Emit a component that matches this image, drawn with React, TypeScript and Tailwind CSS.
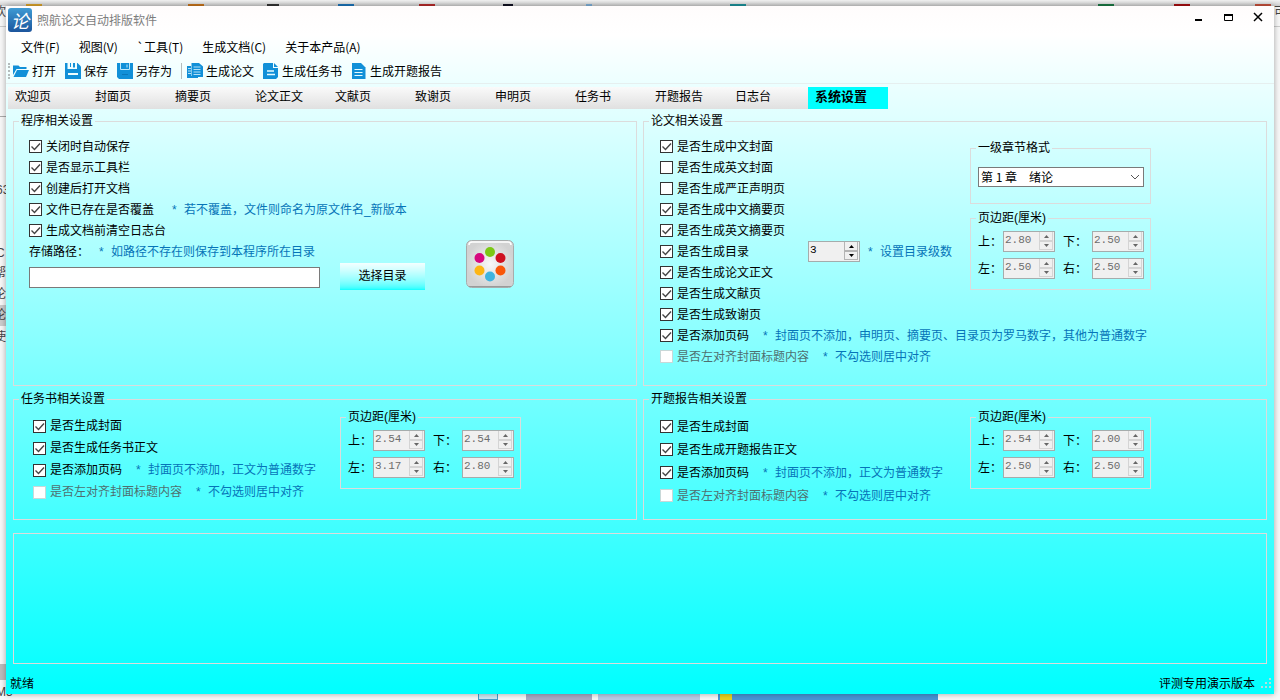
import { useId, useState, type ReactNode } from "react";

const TABS = [
  "欢迎页",
  "封面页",
  "摘要页",
  "论文正文",
  "文献页",
  "致谢页",
  "申明页",
  "任务书",
  "开题报告",
  "日志台",
  "系统设置",
];

const MENUS = ["文件(F)", "视图(V)", "`工具(T)", "生成文档(C)", "关于本产品(A)"];

const DOTS = [
  { x: 24, y: 12, fill: "#7bc814" },
  { x: 34.5, y: 18, fill: "#cf1020" },
  { x: 34.5, y: 30.5, fill: "#f9570a" },
  { x: 24, y: 36.5, fill: "#3fb4e0" },
  { x: 13.5, y: 30.5, fill: "#fdb515" },
  { x: 13.5, y: 18, fill: "#d6077f" },
];

function OpenIcon() {
  return (
    <svg viewBox="0 0 16 16" className="size-4" fill="#1190d8">
      <path d="M0 12V2.5h5.5L7 4h6.5v2H3.5z" />
      <path d="M4 7h12l-3 7H.5z" />
    </svg>
  );
}

function SaveIcon() {
  return (
    <svg viewBox="0 0 16 16" className="size-4">
      <path d="M0 0h12.5L16 3.5V16H0z" fill="#1190d8" />
      <path d="M2.5 0H12v6H2.5z" fill="#eefeff" />
      <path d="M5 0h1v4H5zM8 0h2v4.5H8z" fill="#1190d8" />
      <path d="M3 10h10v2H3z" fill="#eefeff" />
    </svg>
  );
}

function SaveAsIcon() {
  return (
    <svg viewBox="0 0 16 16" className="size-4">
      <path d="M0 0h16v16H2l-2-2z" fill="#1190d8" />
      <path d="M3.5 0v6.5h9V0M10 1.5v3" fill="none" stroke="#bfe9fb" />
      <path d="M5 11.5h6" stroke="#0a78bb" />
    </svg>
  );
}

function PagesIcon() {
  return (
    <svg viewBox="0 0 16 16" className="size-4">
      <path d="M0 3h4v10h7v2H0z" fill="#1190d8" />
      <path d="M4.5 0H12l4 3.5V14H4.5z" fill="#1190d8" />
      <path d="M6.5 4h7M6.5 6.5h7M6.5 9h7M6.5 11.5h7M1 5.5h3M1 8h3M1 10.5h3" stroke="#d9f5ff" strokeWidth="0.8" />
    </svg>
  );
}

function TaskIcon() {
  return (
    <svg viewBox="0 0 16 16" className="size-4">
      <path d="M1 0h9v5h5v9l-2 2H0V1z" fill="#1190d8" />
      <path d="M11 0l4 4h-4z" fill="#1190d8" />
      <path d="M4 8h7M4 11.5h8" stroke="#e6fbff" strokeWidth="1.5" />
    </svg>
  );
}

function ReportIcon() {
  return (
    <svg viewBox="0 0 16 16" className="size-4">
      <path d="M1 0h9l4.5 4.5V16H1z" fill="#1190d8" />
      <path d="M3.5 6.5h8M3.5 9.5h8M3.5 12.5h8" stroke="#e6fbff" strokeWidth="1.2" />
    </svg>
  );
}

function ToolButton({ icon, label }: { icon: ReactNode; label: string }) {
  return (
    <button type="button" className="flex items-center gap-[3px] whitespace-nowrap">
      {icon}
      {label}
    </button>
  );
}

function Hint({ text, className = "ml-[13px]" }: { text: string; className?: string }) {
  return (
    <span className={`flex whitespace-nowrap text-[#0674b8] ${className}`}>
      <span className="w-[13px] pl-px">*</span>
      {text}
    </span>
  );
}

interface CheckProps {
  label: string;
  checked?: boolean;
  disabled?: boolean;
  className?: string;
}

function Check({ label, checked = true, disabled, className = "" }: CheckProps) {
  return (
    <label className={`flex items-center gap-1 whitespace-nowrap ${disabled ? "text-[#4f6f70]" : ""} ${className}`}>
      <span className="grid">
        <input
          type="checkbox"
          defaultChecked={checked}
          disabled={disabled}
          className="peer col-start-1 row-start-1 size-[13px] appearance-none border border-[#333] bg-white disabled:border-[#c8d8d8]"
        />
        <svg
          viewBox="0 0 13 13"
          className="pointer-events-none invisible col-start-1 row-start-1 size-[13px] peer-checked:visible"
          fill="none"
          stroke="#444"
          strokeWidth="1.4"
        >
          <path d="M2.5 6.5l3 3L11 3.5" />
        </svg>
      </span>
      {label}
    </label>
  );
}

function Group({ title, className = "", children }: { title: string; className?: string; children?: ReactNode }) {
  return (
    <fieldset className={`min-w-0 border border-[#dcdcdc] ${className}`}>
      <legend className="ml-[5px] px-0.5 leading-[13px] whitespace-nowrap">{title}</legend>
      {children}
    </fieldset>
  );
}

function Spin({ id, value, label, disabled }: { id?: string; value: string; label?: string; disabled?: boolean }) {
  const tone = disabled ? "border-[#d4d4d4] text-[#666]" : "border-[#b4b4b4] text-black";
  return (
    <div className="flex h-[21px] w-[52px] justify-between border border-[#a5acac] bg-[#f0f0f0]">
      <input
        id={id}
        aria-label={label}
        defaultValue={value}
        disabled={disabled}
        className="h-4 w-[34px] min-w-0 pl-px font-['Liberation_Mono',monospace] text-[11px] disabled:text-[#6d6d6d]"
      />
      <div className="flex flex-col pr-px pb-px">
        <button type="button" aria-label="增加" disabled={disabled} className={`flex h-[9px] w-3.5 items-center justify-center border-x border-b ${tone}`}>
          <svg viewBox="0 0 5 3" className="h-[3px] w-[5px]" fill="currentColor">
            <path d="M0 3L2.5 0 5 3z" />
          </svg>
        </button>
        <button type="button" aria-label="减少" disabled={disabled} className={`flex h-[9px] w-3.5 items-center justify-center border ${tone}`}>
          <svg viewBox="0 0 5 3" className="h-[3px] w-[5px]" fill="currentColor">
            <path d="M0 0L2.5 3 5 0z" />
          </svg>
        </button>
      </div>
    </div>
  );
}

function Margins({ top, bottom, left, right }: { top: string; bottom: string; left: string; right: string }) {
  const id = useId();
  const fields = [
    ["上：", top],
    ["下：", bottom],
    ["左：", left],
    ["右：", right],
  ];
  return (
    <Group title="页边距(厘米)" className="w-[181px]">
      <div className="grid grid-cols-[77px_81px] gap-x-2 gap-y-1.5 pt-1.5 pb-2.5 pl-[7px]">
        {fields.map(([label, value]) => (
          <div key={label} className="flex items-center justify-between">
            <label htmlFor={id + label} className="w-[25px] whitespace-nowrap">
              {label}
            </label>
            <Spin id={id + label} value={value} disabled />
          </div>
        ))}
      </div>
    </Group>
  );
}

// slivers of the other windows that stay visible around the frame
function Backdrop() {
  return (
    <div aria-hidden className="absolute inset-0 overflow-hidden bg-[#f8f8f8] text-[#444]">
      <div className="h-1.5 bg-linear-to-b from-[#f2f2f2] to-[#cfcfcf]" />
      <span className="absolute top-1 left-[26px] h-1 w-4 bg-[#dca32a]" />
      <span className="absolute top-1 left-[188px] h-1 w-4 bg-[#c8741c]" />
      <span className="absolute top-1 left-[267px] h-1 w-3 bg-[#333]" />
      <span className="absolute top-1 left-[338px] h-1 w-4 bg-[#1c74ba]" />
      <span className="absolute top-1 left-[419px] h-1 w-4 bg-[#b82a2a]" />
      <span className="absolute top-1 left-[503px] h-1 w-2.5 bg-[#112]" />
      <span className="absolute top-1 left-[586px] h-1 w-1.5 bg-[#7fb0d8]" />
      <span className="absolute top-1 left-[730px] h-1 w-4 bg-[#1d939c]" />
      <span className="absolute top-1 left-[1098px] h-1 w-4 bg-[#1c7a45]" />
      <span className="absolute top-1 left-[1174px] h-1 w-4 bg-[#a80d10]" />
      <span className="absolute top-1 left-[1255px] h-1 w-4 bg-[#c8503c]" />
      <span className="absolute top-1 -left-1.5">欢</span>
      <span className="absolute top-[26px] left-0 h-px w-2 bg-[#ccc]" />
      <span className="absolute top-[116px] left-0 h-px w-2 bg-[#aaa]" />
      <span className="absolute top-[182px] -left-1">63</span>
      <span className="absolute top-[245px] -left-1">C</span>
      <span className="absolute top-[265px] -left-1.5">帮</span>
      <span className="absolute top-[286px] -left-1.5">论</span>
      <span className="absolute top-[305px] left-0 h-[21px] w-2 bg-[#ccc]" />
      <span className="absolute top-[307px] -left-1.5">论</span>
      <span className="absolute top-[329px] -left-1.5">使</span>
      <span className="absolute bottom-5 left-0 h-4 w-2 bg-[#bbb]" />
      <span className="absolute bottom-0 -left-1">M5</span>
      <span className="absolute bottom-0 left-[478px] h-2 w-5 border border-[#4a9cc8] bg-[#cde8f4]" />
      <span className="absolute bottom-0 left-[526px] h-2 w-[66px] bg-[#a9a9c4]" />
      <span className="absolute bottom-0 left-[598px] h-2 w-[102px] bg-[#b8cbe6]" />
      <span className="absolute bottom-0 left-[718px] h-2 w-[220px] bg-[#4a94d4]" />
      <span className="absolute bottom-0 left-[720px] h-2 w-3 bg-[#e8d020]" />
      <span className="absolute top-1 left-[1274px]">可</span>
      <span className="absolute top-[26px] right-0 h-px w-2 bg-[#ccc]" />
    </div>
  );
}

export default function App() {
  const [tab, setTab] = useState("系统设置");

  return (
    <div className="relative p-1.5 font-['Liberation_Sans','Noto_Sans_CJK_SC',sans-serif] text-xs text-black">
      <Backdrop />
      <div className="relative flex min-h-[calc(100vh-12px)] flex-col bg-[linear-gradient(#fffcfc_0,#fff_29px,#0ff_100%)] shadow-[0_0_6px_rgba(0,0,0,0.35)]">
        <header className="flex h-[29px] items-start justify-between pl-0.5 pr-px font-['Noto_Sans_CJK_SC',sans-serif]">
          <div className="flex items-center gap-[5px] pt-0.5 text-[#7d7d7d]">
            <span className="flex size-6 items-center justify-center rounded-[3px] bg-linear-to-b from-[#3f9bd4] to-[#1c559c] text-lg leading-6 text-white italic">
              论
            </span>
            <h1>煦航论文自动排版软件</h1>
          </div>
          <div className="flex h-[22px]">
            <button type="button" aria-label="最小化" className="flex w-[30px] items-center justify-center">
              <svg viewBox="0 0 10 10" className="size-2.5">
                <path d="M2 8h7" stroke="#000" strokeWidth="2" />
              </svg>
            </button>
            <button type="button" aria-label="最大化" className="flex w-[30px] items-center justify-center">
              <svg viewBox="0 0 10 10" className="size-2.5" fill="none" stroke="#000">
                <path d="M1.5 3v5.5h8V3" />
                <path d="M1 3h9" strokeWidth="2" />
              </svg>
            </button>
            <button type="button" aria-label="关闭" className="flex w-[30px] items-center justify-center">
              <svg viewBox="0 0 10 10" className="size-2.5" fill="none" stroke="#000" strokeWidth="1.5">
                <path d="M1 1l8 8M9 1L1 9" />
              </svg>
            </button>
          </div>
        </header>

        <nav className="flex h-6 items-center gap-[19px] pl-[15px] font-['Noto_Sans_CJK_SC',sans-serif]">
          {MENUS.map((menu) => (
            <button key={menu} type="button" className="whitespace-nowrap">
              {menu}
            </button>
          ))}
        </nav>

        <div className="flex h-[25px] items-center border-b border-[#e6efef] pl-0.5 font-['Noto_Sans_CJK_SC',sans-serif]">
          <span className="mr-[3px] h-4 border-l-2 border-dotted border-[#b4bcbc]" />
          <div className="flex gap-[9px]">
            <ToolButton icon={<OpenIcon />} label="打开" />
            <ToolButton icon={<SaveIcon />} label="保存" />
            <ToolButton icon={<SaveAsIcon />} label="另存为" />
          </div>
          <div className="ml-[9px] flex gap-[9px] border-l border-[#b4bcbc] pl-[5px]">
            <ToolButton icon={<PagesIcon />} label="生成论文" />
            <ToolButton icon={<TaskIcon />} label="生成任务书" />
            <ToolButton icon={<ReportIcon />} label="生成开题报告" />
          </div>
        </div>

        <div role="tablist" className="mt-[3px] flex h-[22px] pl-0.5">
          {TABS.map((name) => (
            <button
              key={name}
              type="button"
              role="tab"
              aria-selected={name === tab}
              onClick={() => setTab(name)}
              className={`w-20 pb-0.5 pl-[7px] text-left whitespace-nowrap ${
                name === tab ? "bg-[#00ffff] text-[13px] font-bold" : "bg-linear-to-b from-[#fafafa] to-[#e0e0e0]"
              }`}
            >
              {name}
            </button>
          ))}
        </div>

        <main className="mt-1.5 flex flex-1 flex-col pr-[7px] pl-[7px]">
          <div className="grid grid-cols-2 gap-x-1.5 gap-y-[7px]">
            <Group title="程序相关设置">
              <div className="pt-2 pl-[15px]">
                <Check label="关闭时自动保存" className="h-[21px]" />
                <Check label="是否显示工具栏" className="h-[21px]" />
                <Check label="创建后打开文档" className="h-[21px]" />
                <div className="flex h-[21px] items-center">
                  <Check label="文件已存在是否覆盖" />
                  <Hint text="若不覆盖，文件则命名为原文件名_新版本" className="ml-[17px]" />
                </div>
                <div className="flex items-end">
                  <div className="w-[291px] pb-0.5">
                    <Check label="生成文档前清空日志台" className="h-[21px]" />
                    <div className="flex h-[21px] items-center">
                      <label htmlFor="path" className="whitespace-nowrap">
                        存储路径：
                      </label>
                      <Hint text="如路径不存在则保存到本程序所在目录" className="ml-[9px]" />
                    </div>
                    <input id="path" className="mt-[5px] block h-[21px] w-full border border-[#7a7a7a] bg-white px-1" />
                  </div>
                  <button type="button" className="ml-5 h-[27px] w-[85px] bg-linear-to-b from-[#f4ffff] to-[#00ffff] pb-0.5">
                    选择目录
                  </button>
                  <button type="button" aria-label="主题颜色" className="ml-[41px] pb-0.5">
                    <svg viewBox="0 0 48 48" className="size-12">
                      <defs>
                        <radialGradient id="tile">
                          <stop offset="0" stopColor="#f8f8f8" />
                          <stop offset="1" stopColor="#d2d2d2" />
                        </radialGradient>
                      </defs>
                      <rect x="0.5" y="0.5" width="47" height="47" rx="5" fill="url(#tile)" stroke="#a8acac" />
                      <path d="M3 5q0-3 3-3h36q3 0 3 3" fill="none" stroke="#fff" strokeWidth="1.5" />
                      <path d="M3 46.5h42" stroke="#999" />
                      {DOTS.map((dot) => (
                        <circle key={dot.fill} cx={dot.x} cy={dot.y} r="5" fill={dot.fill} />
                      ))}
                    </svg>
                  </button>
                </div>
              </div>
            </Group>

            <Group title="论文相关设置">
              <div className="pt-2 pb-[18px] pl-4">
                <div className="flex items-start">
                  <div className="w-[310px]">
                    <Check label="是否生成中文封面" className="h-[21px]" />
                    <Check label="是否生成英文封面" checked={false} className="h-[21px]" />
                    <Check label="是否生成严正声明页" checked={false} className="h-[21px]" />
                    <Check label="是否生成中文摘要页" className="h-[21px]" />
                    <Check label="是否生成英文摘要页" className="h-[21px]" />
                    <div className="flex h-[21px] items-center">
                      <Check label="是否生成目录" className="w-[148px]" />
                      <Spin value="3" label="目录级数" />
                      <Hint text="设置目录级数" className="ml-[7px]" />
                    </div>
                    <Check label="是否生成论文正文" className="h-[21px]" />
                    <Check label="是否生成文献页" className="h-[21px]" />
                    <Check label="是否生成致谢页" className="h-[21px]" />
                  </div>
                  <div className="flex flex-col gap-2 pt-1.5">
                    <Group title="一级章节格式" className="w-[181px]">
                      <div className="grid pt-3 pr-1.5 pb-4 pl-[7px]">
                        <select
                          aria-label="一级章节格式"
                          className="col-start-1 row-start-1 h-5 appearance-none border border-[#7a7a7a] bg-white px-0.5 font-['Noto_Sans_CJK_SC',sans-serif] leading-4"
                        >
                          <option>第 1 章　绪论</option>
                          <option>第一章　绪论</option>
                        </select>
                        <svg
                          viewBox="0 0 10 6"
                          className="pointer-events-none z-10 col-start-1 row-start-1 mr-1 h-1.5 w-2.5 self-center justify-self-end"
                          fill="none"
                          stroke="#555"
                        >
                          <path d="M1 1l4 4 4-4" />
                        </svg>
                      </div>
                    </Group>
                    <Margins top="2.80" bottom="2.50" left="2.50" right="2.50" />
                  </div>
                </div>
                <div className="flex h-[21px] items-center">
                  <Check label="是否添加页码" />
                  <Hint text="封面页不添加，申明页、摘要页、目录页为罗马数字，其他为普通数字" />
                </div>
                <div className="flex h-[21px] items-center">
                  <Check label="是否左对齐封面标题内容" checked={false} disabled />
                  <Hint text="不勾选则居中对齐" />
                </div>
              </div>
            </Group>

            <Group title="任务书相关设置">
              <div className="flex items-start pt-[5px] pl-[19px]">
                <div className="w-[307px] pt-1">
                  <Check label="是否生成封面" className="h-[22px]" />
                  <Check label="是否生成任务书正文" className="h-[22px]" />
                  <div className="flex h-[22px] items-center">
                    <Check label="是否添加页码" />
                    <Hint text="封面页不添加，正文为普通数字" />
                  </div>
                  <div className="flex h-[22px] items-center">
                    <Check label="是否左对齐封面标题内容" checked={false} disabled />
                    <Hint text="不勾选则居中对齐" />
                  </div>
                </div>
                <Margins top="2.54" bottom="2.54" left="3.17" right="2.80" />
              </div>
            </Group>

            <Group title="开题报告相关设置">
              <div className="flex items-start pt-[5px] pb-3 pl-4">
                <div className="w-[310px] pt-1">
                  <Check label="是否生成封面" className="h-[23px]" />
                  <Check label="是否生成开题报告正文" className="h-[23px]" />
                  <div className="flex h-[23px] items-center">
                    <Check label="是否添加页码" />
                    <Hint text="封面页不添加，正文为普通数字" />
                  </div>
                  <div className="flex h-[23px] items-center">
                    <Check label="是否左对齐封面标题内容" checked={false} disabled />
                    <Hint text="不勾选则居中对齐" />
                  </div>
                </div>
                <Margins top="2.54" bottom="2.00" left="2.50" right="2.50" />
              </div>
            </Group>
          </div>

          <section className="mt-[13px] flex-1 border border-[#dcdcdc]" />
        </main>

        <footer className="flex h-[30px] items-center justify-between pt-2 pr-0.5 pl-1 font-['Noto_Sans_CJK_SC',sans-serif]">
          <span>就绪</span>
          <div className="flex items-center gap-1.5">
            <span>评测专用演示版本</span>
            <svg viewBox="0 0 11 11" className="size-[11px]" fill="#b4dede">
              <path d="M8 0h2v2H8zM4 4h2v2H4zM8 4h2v2H8zM0 8h2v2H0zM4 8h2v2H4zM8 8h2v2H8z" />
            </svg>
          </div>
        </footer>
      </div>
    </div>
  );
}
